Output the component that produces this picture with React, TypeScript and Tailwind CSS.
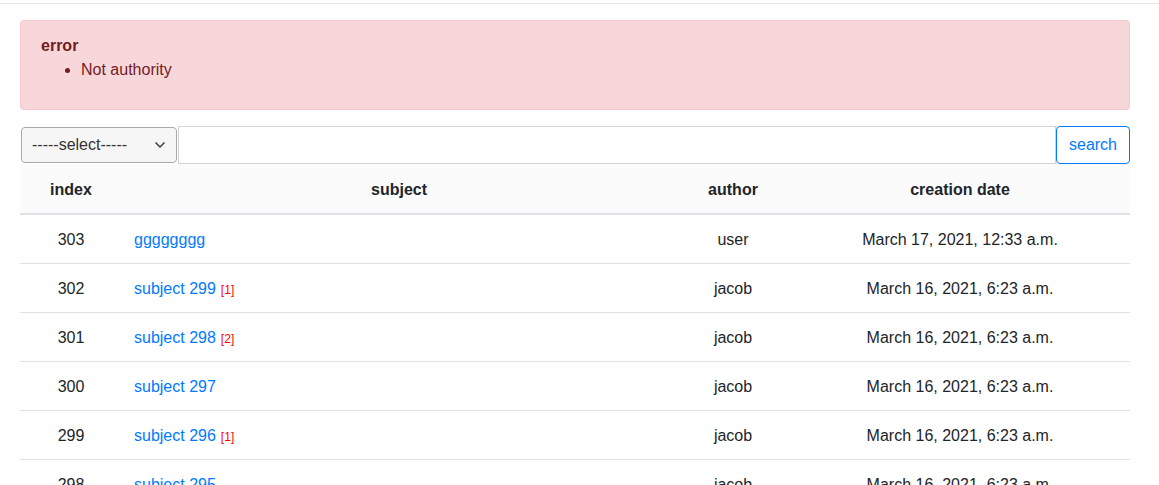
import React from 'react';
import { ChevronDown } from 'lucide-react';

interface Post {
  id: number;
  subject: string;
  replies?: number;
  author: string;
  created: string;
}

const posts: Post[] = [
  { id: 303, subject: 'gggggggg', author: 'user', created: 'March 17, 2021, 12:33 a.m.' },
  { id: 302, subject: 'subject 299', replies: 1, author: 'jacob', created: 'March 16, 2021, 6:23 a.m.' },
  { id: 301, subject: 'subject 298', replies: 2, author: 'jacob', created: 'March 16, 2021, 6:23 a.m.' },
  { id: 300, subject: 'subject 297', author: 'jacob', created: 'March 16, 2021, 6:23 a.m.' },
  { id: 299, subject: 'subject 296', replies: 1, author: 'jacob', created: 'March 16, 2021, 6:23 a.m.' },
  { id: 298, subject: 'subject 295', author: 'jacob', created: 'March 16, 2021, 6:23 a.m.' },
];

const App: React.FC = () => {
  return (
    <div className="min-h-screen bg-white text-[16px] leading-6 text-[#212529] font-['Liberation_Sans',Arial,sans-serif]">
      <div className="h-[4px] border-b border-[#e5e7ea]" />

      <div className="w-[1110px] pl-5 pt-4 box-content">
        <div className="mb-4 rounded border border-[#f5c6cb] bg-[#f8d7da] px-5 pb-[11px] pt-[13px] text-[#721c24]">
          <strong className="block font-bold">error</strong>
          <ul className="mb-4 list-disc pl-[40px] marker:text-[15px]">
            <li>Not authority</li>
          </ul>
        </div>

        <form className="flex h-[38px]" onSubmit={(e) => e.preventDefault()}>
          <div className="my-px ml-px flex w-[156px] shrink-0 items-center justify-between rounded-[4px] border border-[#a9a9a9] bg-[#f6f6f6] pl-[10px] pr-[8px] text-[#333]">
            <span>-----select-----</span>
            <ChevronDown className="h-4 w-4 text-[#444]" strokeWidth={2.5} />
          </div>
          <input
            type="text"
            className="ml-px min-w-0 flex-1 border border-[#ced4da] bg-white px-3 outline-none"
          />
          <button
            type="submit"
            className="w-[74px] shrink-0 rounded-[4px] border border-[#007bff] bg-white text-[#007bff]"
          >
            search
          </button>
        </form>

        <table className="w-full border-collapse">
          <thead className="bg-[#fbfbfb]">
            <tr className="border-b-2 border-[#dee2e6]">
              <th className="w-[102px] px-3 pb-[11px] pt-[14px] text-center font-bold">index</th>
              <th className="px-3 pb-[11px] pt-[14px] text-center font-bold">subject</th>
              <th className="w-[114px] px-3 pb-[11px] pt-[14px] text-center font-bold">author</th>
              <th className="w-[340px] px-3 pb-[11px] pt-[14px] text-center font-bold">creation date</th>
            </tr>
          </thead>
          <tbody>
            {posts.map((p) => (
              <tr key={p.id} className="border-b border-[#dee2e6]">
                <td className="h-[49px] px-3 pt-[2px] text-center">{p.id}</td>
                <td className="h-[49px] px-3 pt-[2px] text-left">
                  <a href="#" className="text-[#007bff]">{p.subject}</a>
                  {p.replies && (
                    <span className="ml-[5px] text-[12px] leading-none text-[#ff0000]">[{p.replies}]</span>
                  )}
                </td>
                <td className="h-[49px] px-3 pt-[2px] text-center">{p.author}</td>
                <td className="h-[49px] px-3 pt-[2px] text-center">{p.created}</td>
              </tr>
            ))}
          </tbody>
        </table>
      </div>
    </div>
  );
};

export default App;
